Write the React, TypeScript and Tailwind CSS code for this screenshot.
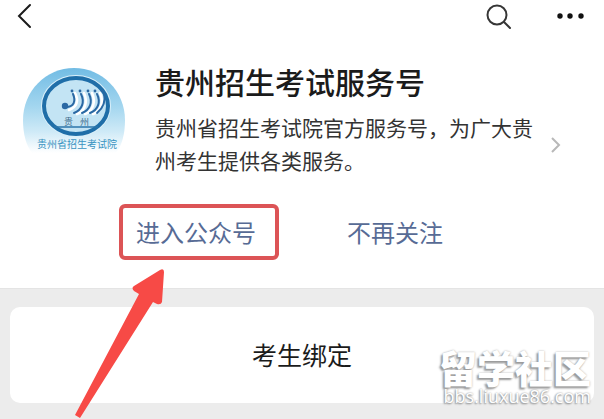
import React from 'react'

const DESCRIPTION = '贵州省招生考试院官方服务号，为广大贵州考生提供各类服务。'

function AccountLogo() {
  return (
    <svg viewBox="0 0 104 88" className="w-[104px] h-[88px] shrink-0" role="img" aria-label="贵州省招生考试院">
      <defs>
        <linearGradient id="sky" x1="0" y1="0" x2="0" y2="1">
          <stop offset="0" stopColor="#72bce4" />
          <stop offset="0.45" stopColor="#a3d6ef" />
          <stop offset="0.75" stopColor="#cfeaf7" />
          <stop offset="1" stopColor="#ffffff" />
        </linearGradient>
      </defs>
      <path d="M10 87C4 79 1 68 1 54C1 25 24 2 52 2C80 2 103 25 103 54C103 68 100 79 94 87Z" fill="url(#sky)" />
      <ellipse cx="54" cy="40" rx="34" ry="30" fill="none" stroke="#d9eff9" strokeWidth="2" />
      <ellipse cx="54" cy="40" rx="32" ry="28" fill="#c3e4f4" stroke="#1f6ea8" strokeWidth="4" />
      <path d="M32 61H76" stroke="#2b76ab" strokeWidth="1.4" />
      <g fill="none" stroke="#ffffff" strokeWidth="2.6" strokeLinecap="round">
        <path d="M53 27C57 35 55 41 47 44" />
        <path d="M62 27C66 36 63 45 55 48" />
        <path d="M70 27C74 36 71 45 63 48" />
        <path d="M78 27C82 36 79 45 71 48" />
      </g>
      <g fill="none" stroke="#2a68a3" strokeWidth="2" strokeLinecap="round">
        <path d="M51 28C54 35 52 41 44 41" />
        <path d="M59 28C63 36 60 44 52 47" />
        <path d="M67 28C71 36 68 44 60 47" />
        <path d="M75 28C79 36 76 44 68 47" />
        <path d="M82 27C84 36 80 43 75 47" />
      </g>
      <g fill="#2a68a3">
        <circle cx="43" cy="40" r="3.2" />
        <circle cx="50" cy="25" r="1.4" />
        <circle cx="58" cy="25" r="1.4" />
        <circle cx="66" cy="25" r="1.4" />
        <circle cx="73" cy="25" r="1.4" />
        <circle cx="80" cy="25" r="1.4" />
      </g>
      <g className="font-['Noto_Sans_CJK_SC',sans-serif]">
        <text x="42" y="59" fontSize="9" fill="#3f6d8c">贵</text>
        <text x="58" y="59" fontSize="9" fill="#3f6d8c">州</text>
        <text x="15" y="82" fontSize="10" fill="#3a93c1">贵州省招生考试院</text>
      </g>
    </svg>
  )
}

function Arrow() {
  return (
    <svg viewBox="0 0 96 154" className="absolute -left-12 top-[62px] z-10 w-24 h-[154px] pointer-events-none" aria-hidden="true">
      <path d="M4 149L68 28L63 25Q60 22 63 20L89 4Q93 2 93 6L91 36Q90 39 86 38L82 36L9 152Z" fill="#f74a46" />
    </svg>
  )
}

export default function App() {
  return (
    <div className="relative min-h-screen overflow-hidden bg-[#ececec] text-[#1b1b1b] font-['Noto_Sans_CJK_SC',sans-serif]">
      <div className="bg-white border-b border-[#e4e4e4] pb-7">
        <header className="flex items-center justify-between h-8 pl-4 pr-5">
          <button aria-label="返回">
            <svg viewBox="0 0 18 26" className="w-[18px] h-[26px]" fill="none" stroke="#1b1b1b" strokeWidth="2" strokeLinecap="round">
              <path d="M14 2L3 13L14 24" />
            </svg>
          </button>
          <div className="flex items-center gap-11">
            <button aria-label="搜索">
              <svg viewBox="0 0 26 26" className="w-[26px] h-[26px]" fill="none" stroke="#363636" strokeWidth="2">
                <circle cx="11" cy="12" r="9.5" />
                <path d="M18 19L24 25" strokeLinecap="round" />
              </svg>
            </button>
            <button aria-label="更多">
              <svg viewBox="0 0 28 8" className="w-7 h-2" fill="#111111">
                <circle cx="4" cy="4" r="2.7" />
                <circle cx="14" cy="4" r="2.7" />
                <circle cx="25" cy="4" r="2.7" />
              </svg>
            </button>
          </div>
        </header>

        <a href="#profile" className="flex items-start pl-[22px] pr-[42px] pt-[34px]">
          <AccountLogo />
          <div className="flex-1 ml-[29px]">
            <h1 className="text-[30px] leading-[30px] font-medium whitespace-nowrap">贵州招生考试服务号</h1>
            <p className="mt-[15px] text-[21px] leading-[33px] text-[#333333]">{DESCRIPTION}</p>
          </div>
          <svg viewBox="0 0 12 18" className="w-3 h-[18px] mt-[70px] shrink-0" fill="none" stroke="#b8b8b8" strokeWidth="2">
            <path d="M2 2L9 9L2 16" />
          </svg>
        </a>

        {/* Actions */}
        <div className="flex items-center gap-[68px] mt-[27px] pl-[119px] text-2xl text-[#576b95]">
          <div className="relative">
            <button className="h-14 pl-[13px] pr-[19px] border-4 border-[#dc5456] rounded-md whitespace-nowrap">进入公众号</button>
            <Arrow />
          </div>
          <button className="whitespace-nowrap">不再关注</button>
        </div>
      </div>

      <main className="px-[10px] pt-[18px] pb-4">
        <button className="w-full h-24 bg-white rounded-[10px] text-[25px]">考生绑定</button>
      </main>

      {/* Watermark */}
      <div className="absolute right-[13px] bottom-[14px] text-right text-white pointer-events-none">
        <p className="text-[38px] leading-[40px] font-black [text-shadow:-2px_2px_2px_#999999,0_0_2px_#aaaaaa]">留学社区</p>
        <p className="text-[18px] leading-[18px] font-['Open_Sans',sans-serif] [text-shadow:-1px_1px_2px_#888888,0_0_2px_#999999]">bbs.liuxue86.com</p>
      </div>
    </div>
  )
}
